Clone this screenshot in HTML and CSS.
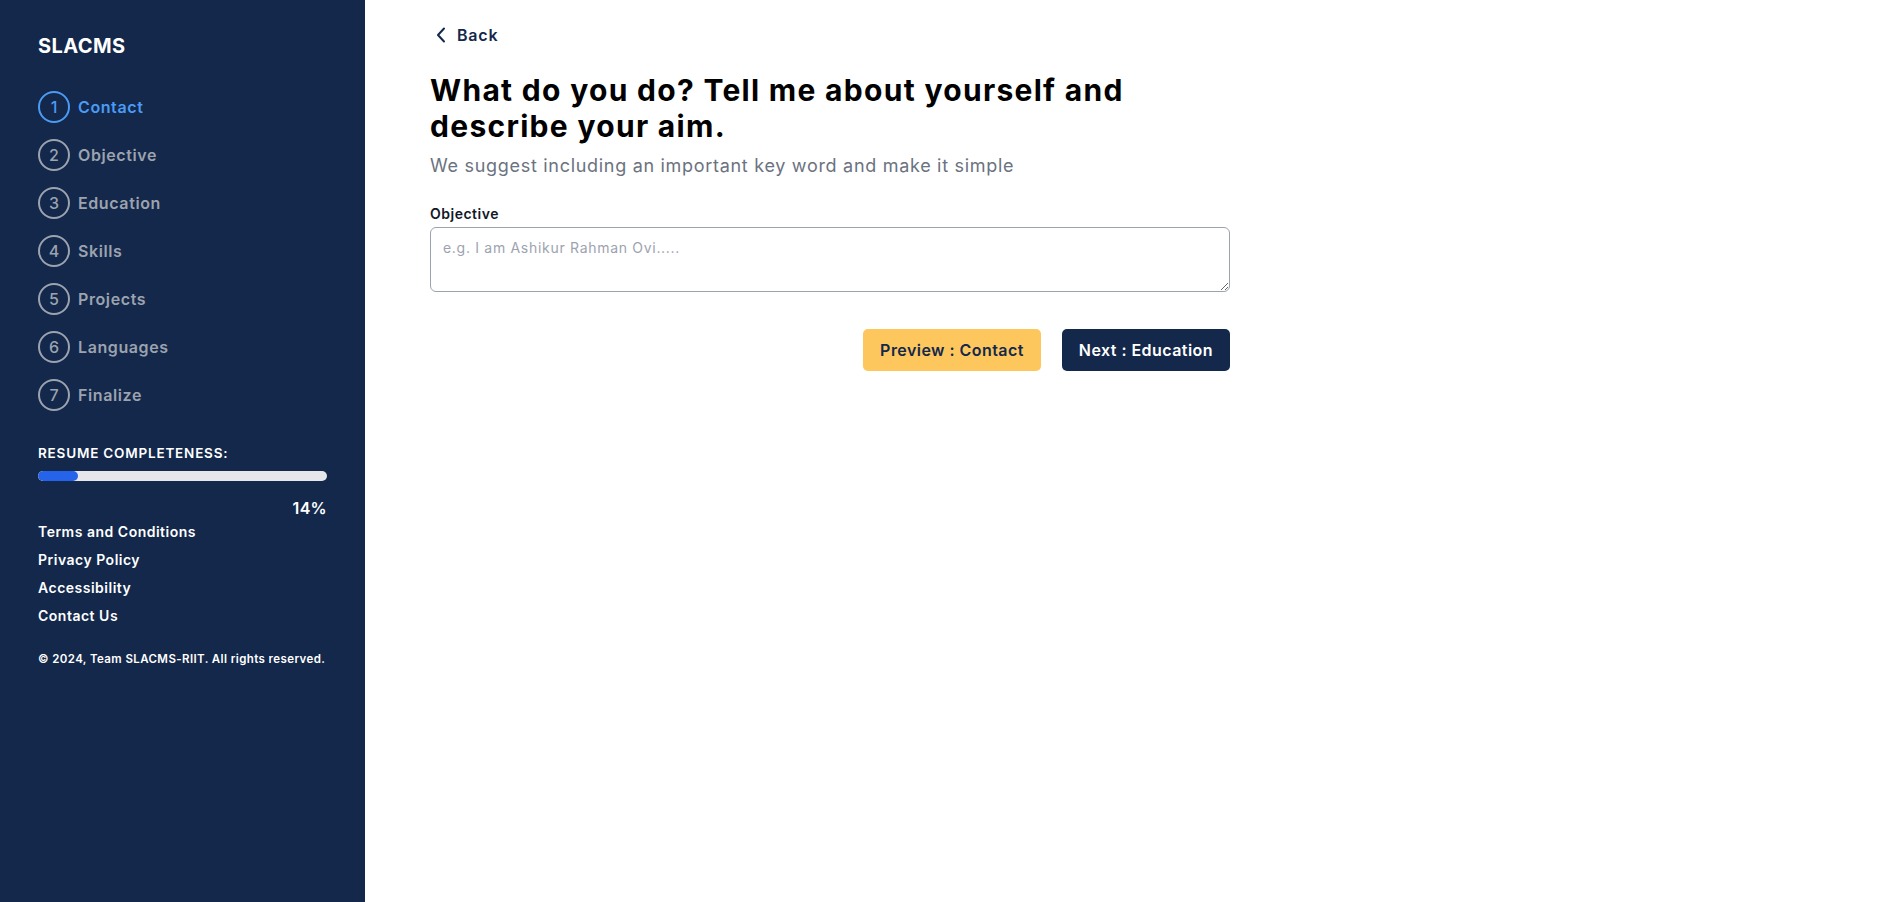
FILE: index.html
```html
<!DOCTYPE html>
<html lang="en">
<head>
<meta charset="utf-8">
<title>SLACMS - Objective</title>
<link rel="stylesheet" href="styles.css">
</head>
<body>
<div class="app">
  <aside class="sidebar">
    <div class="brand">SLACMS</div>
    <ol class="steps">
      <li class="step active"><span class="num">1</span><span class="label">Contact</span></li>
      <li class="step"><span class="num">2</span><span class="label">Objective</span></li>
      <li class="step"><span class="num">3</span><span class="label">Education</span></li>
      <li class="step"><span class="num">4</span><span class="label">Skills</span></li>
      <li class="step"><span class="num">5</span><span class="label">Projects</span></li>
      <li class="step"><span class="num">6</span><span class="label">Languages</span></li>
      <li class="step"><span class="num">7</span><span class="label">Finalize</span></li>
    </ol>
    <div class="completeness">
      <div class="comp-title">RESUME COMPLETENESS:</div>
      <div class="bar"><div class="fill" style="width:14%"></div></div>
      <div class="pct">14%</div>
    </div>
    <ul class="links">
      <li>Terms and Conditions</li>
      <li>Privacy Policy</li>
      <li>Accessibility</li>
      <li>Contact Us</li>
    </ul>
    <div class="copy">© 2024, Team SLACMS-RIIT. All rights reserved.</div>
  </aside>
  <main class="main">
    <div class="content">
      <a class="back" href="#">
        <svg width="12" height="16" viewBox="0 0 12 16" fill="none" stroke="currentColor" stroke-width="2" stroke-linecap="round" stroke-linejoin="round"><path d="M9 1.5 L3 8 L9 14.5"/></svg>
        <span>Back</span>
      </a>
      <h1 class="title">What do you do? Tell me about yourself and describe your aim.</h1>
      <p class="subtitle">We suggest including an important key word and make it simple</p>
      <label class="field-label" for="objective">Objective</label>
      <textarea id="objective" class="field" rows="2" placeholder="e.g. I am Ashikur Rahman Ovi....."></textarea>
      <div class="actions">
        <button class="btn btn-preview">Preview : Contact</button>
        <button class="btn btn-next">Next : Education</button>
      </div>
    </div>
  </main>
</div>
</body>
</html>
```

FILE: styles.css
```css
* { box-sizing: border-box; }
html, body { margin: 0; padding: 0; }
body {
  font-family: Inter, "Open Sans", "Liberation Sans", sans-serif;
  background: #ffffff;
  color: #111827;
}
.app {
  display: flex;
  min-height: 902px;
}
.sidebar {
  width: 365px;
  flex-shrink: 0;
  background: #13284b;
  color: #ffffff;
  padding: 32px 38px 0 38px;
  display: flex;
  flex-direction: column;
}
.brand {
  font-size: 20px;
  line-height: 28px;
  font-weight: 700;
  letter-spacing: 0.4px;
}
.steps {
  list-style: none;
  margin: 31px 0 0 0;
  padding: 0;
  display: flex;
  flex-direction: column;
  gap: 16px;
}
.step {
  display: flex;
  align-items: center;
  gap: 8px;
  color: #9ca3af;
  font-size: 16px;
  font-weight: 600;
  letter-spacing: 0.6px;
}
.step .num {
  width: 32px;
  height: 32px;
  border: 2px solid #9ca3af;
  border-radius: 50%;
  display: flex;
  align-items: center;
  justify-content: center;
  font-size: 16px;
  font-weight: 500;
  letter-spacing: 0;
}
.step.active { color: #4b9bf5; }
.step.active .num { border-color: #4b9bf5; }
.completeness {
  margin-top: 32px;
}
.comp-title {
  font-size: 13.5px;
  line-height: 20px;
  font-weight: 600;
  letter-spacing: 0.8px;
}
.bar {
  margin-top: 8px;
  height: 10px;
  background: #e5e7eb;
  border-radius: 5px;
  overflow: hidden;
}
.fill {
  height: 100%;
  background: #2563eb;
  border-radius: 5px;
}
.pct {
  margin-top: 17px;
  text-align: right;
  font-size: 16px;
  font-weight: 600;
  line-height: 20px;
  letter-spacing: 0.3px;
}
.links {
  list-style: none;
  margin: 4px 0 0 0;
  padding: 0;
  display: flex;
  flex-direction: column;
  gap: 8px;
}
.links li {
  font-size: 14px;
  line-height: 20px;
  font-weight: 600;
  letter-spacing: 0.5px;
}
.copy {
  margin-top: 25px;
  font-size: 11.5px;
  line-height: 16px;
  font-weight: 600;
  letter-spacing: 0.4px;
}
.main {
  flex: 1;
  padding: 24px 0 0 65px;
}
.content {
  width: 800px;
  display: flex;
  flex-direction: column;
}
.back {
  display: inline-flex;
  align-items: center;
  gap: 10px;
  align-self: flex-start;
  color: #13284b;
  text-decoration: none;
  font-size: 16px;
  font-weight: 600;
  line-height: 22px;
  padding-left: 5px;
  letter-spacing: 0.8px;
}
.back svg { display: block; }
.title {
  margin: 26px 0 0 0;
  font-size: 30px;
  line-height: 36px;
  font-weight: 700;
  color: #000000;
  width: 760px;
  letter-spacing: 1.3px;
}
.subtitle {
  margin: 8px 0 0 0;
  font-size: 18px;
  line-height: 28px;
  color: #6b7280;
  letter-spacing: 0.7px;
}
.field-label {
  margin-top: 24px;
  font-size: 14px;
  line-height: 20px;
  font-weight: 600;
  color: #111827;
  letter-spacing: 0.5px;
}
.field {
  margin-top: 3px;
  width: 100%;
  height: 65px;
  border: 1px solid #9ca3af;
  border-radius: 6px;
  padding: 10px 12px;
  font-family: inherit;
  font-size: 14px;
  line-height: 20px;
  letter-spacing: 0.7px;
  resize: vertical;
  outline: none;
}
.field::placeholder { color: #9ca3af; }
.actions {
  margin-top: 37px;
  display: flex;
  justify-content: flex-end;
  gap: 21px;
}
.btn {
  height: 42px;
  padding: 0 17px;
  border: none;
  border-radius: 5px;
  font-family: inherit;
  font-size: 16px;
  font-weight: 600;
  letter-spacing: 0.45px;
  cursor: pointer;
}
.btn-preview {
  background: #fdc75e;
  color: #13284b;
}
.btn-next {
  background: #13284b;
  color: #ffffff;
}
```
